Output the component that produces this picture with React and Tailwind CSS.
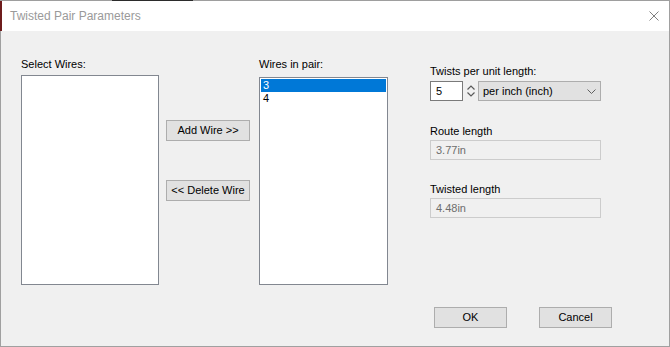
import React from 'react';

const Chevron = ({ up, className }) => (
  <svg width="8" height="5" viewBox="0 0 8 5" className={className}>
    <path
      d={up ? 'M0.5 4.5 L4 1 L7.5 4.5' : 'M0.5 0.5 L4 4 L7.5 0.5'}
      fill="none"
      stroke="#5a5a5a"
      strokeWidth="1.2"
    />
  </svg>
);

const Button = ({ children, className = '' }) => (
  <button
    className={`h-[21px] border border-[#adadad] bg-[#e1e1e1] flex items-center justify-center leading-none text-black ${className}`}
  >
    {children}
  </button>
);

const ReadOnlyField = ({ value }) => (
  <div className="mt-[2px] h-[20px] w-[171px] border border-[#cccccc] bg-[#f0f0f0] pl-[5px] flex items-center text-[#6d6d6d]">
    {value}
  </div>
);

export default function App() {
  return (
    <div className="w-[670px] h-[347px] flex flex-col bg-[#f0f0f0] border-r border-[#a0a0a0] font-['Liberation_Sans',Arial,sans-serif] text-[11px] text-black">
      {/* top window edge */}
      <div className="flex h-px shrink-0">
        <div className="w-[112px] bg-[#9e9e9e]"></div>
        <div className="w-[81px] bg-[#2b2b2b]"></div>
        <div className="flex-1 bg-[#9e9e9e]"></div>
      </div>

      {/* title bar */}
      <div className="h-[30px] shrink-0 bg-white flex items-center justify-between border-l-2 border-[#6e1c1c] pl-[8px] pr-[10px]">
        <span className="text-[12px] text-[#9a9a9a]">Twisted Pair Parameters</span>
        <svg width="10" height="10" viewBox="0 0 10 10">
          <path d="M0.5 0.5 L9.5 9.5 M9.5 0.5 L0.5 9.5" stroke="#808080" strokeWidth="1" fill="none" />
        </svg>
      </div>

      {/* dialog body */}
      <div className="flex-1 flex flex-col border-l border-b border-[#a0a0a0] pl-[20px] pt-[26px]">
        <div className="flex items-start h-[228px]">
          {/* select wires */}
          <div className="w-[138px] flex flex-col">
            <div className="h-[14px] leading-[14px]">Select Wires:</div>
            <div className="mt-[4px] h-[210px] border border-[#828790] bg-white"></div>
          </div>

          {/* add / delete */}
          <div className="ml-[7px] w-[84px] flex flex-col">
            <Button className="mt-[63px] w-[84px]">Add Wire &gt;&gt;</Button>
            <Button className="mt-[39px] w-[84px]">&lt;&lt; Delete Wire</Button>
          </div>

          {/* wires in pair */}
          <div className="ml-[9px] w-[129px] flex flex-col">
            <div className="h-[14px] leading-[14px]">Wires in pair:</div>
            <div className="mt-[6px] h-[208px] border border-[#828790] bg-white p-px">
              <div className="h-[13px] leading-[13px] pl-[2px] bg-[#0078d7] text-white">3</div>
              <div className="h-[13px] leading-[13px] pl-[2px]">4</div>
            </div>
          </div>

          {/* twist parameters */}
          <div className="ml-[42px] w-[171px] flex flex-col">
            <div className="mt-[7px] h-[14px] leading-[14px]">Twists per unit length:</div>
            <div className="mt-[3px] h-[20px] flex">
              <div className="w-[33px] h-[20px] border border-[#7a7a7a] bg-white pl-[5px] flex items-center">5</div>
              <div className="w-[15px] h-[20px] flex flex-col items-center justify-between py-[4px]">
                <Chevron up />
                <Chevron />
              </div>
              <div className="w-[123px] h-[20px] border border-[#adadad] bg-[#e1e1e1] pl-[4px] pr-[4px] flex items-center justify-between">
                <span>per inch (inch)</span>
                <svg width="9" height="5" viewBox="0 0 9 5">
                  <path d="M0.5 0.5 L4.5 4.5 L8.5 0.5" fill="none" stroke="#606060" strokeWidth="1" />
                </svg>
              </div>
            </div>

            <div className="mt-[23px] h-[14px] leading-[14px]">Route length</div>
            <ReadOnlyField value="3.77in" />

            <div className="mt-[22px] h-[14px] leading-[14px]">Twisted length</div>
            <ReadOnlyField value="4.48in" />
          </div>
        </div>

        {/* footer */}
        <div className="mt-[22px] flex justify-end gap-[32px] pr-[57px]">
          <Button className="w-[73px]">OK</Button>
          <Button className="w-[73px]">Cancel</Button>
        </div>
      </div>
    </div>
  );
}
